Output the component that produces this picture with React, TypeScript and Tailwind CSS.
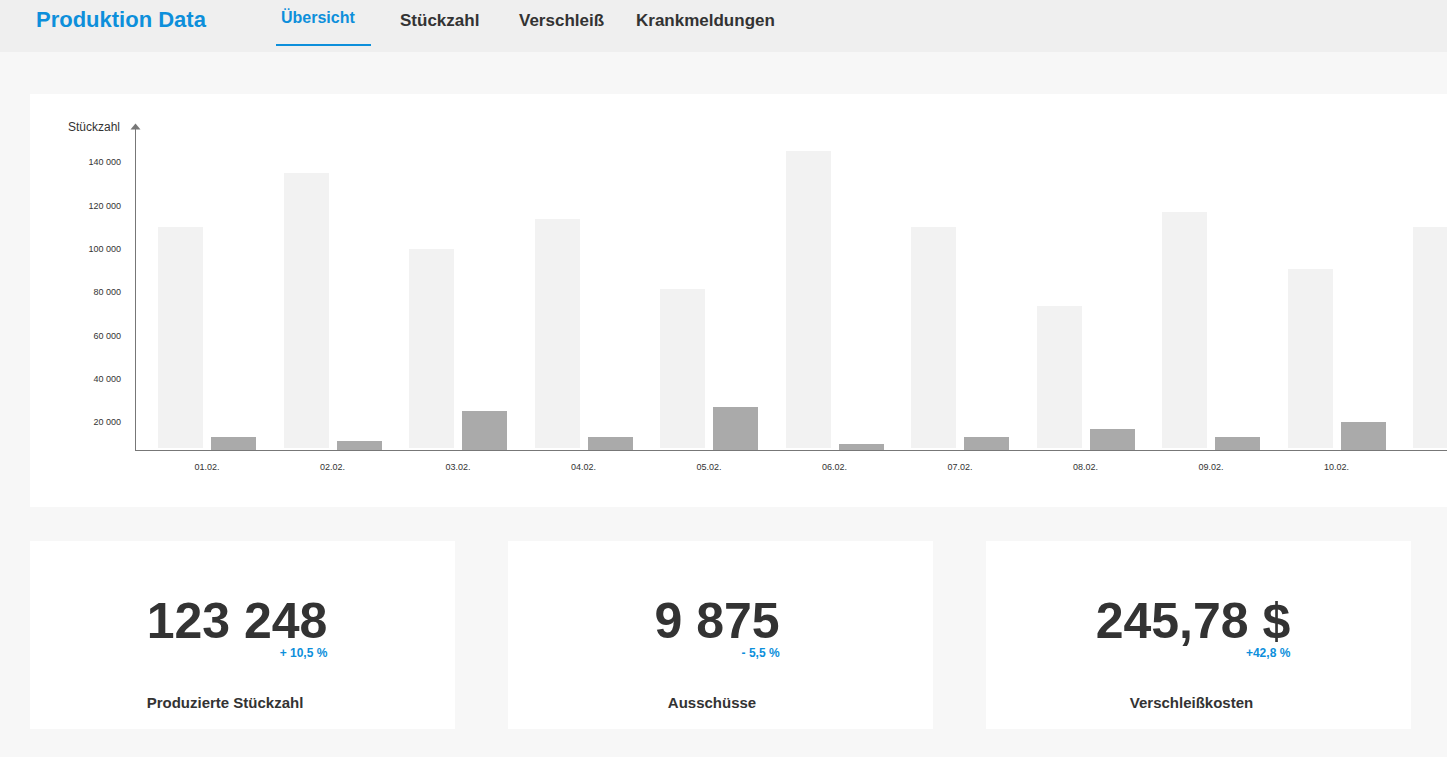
import React from 'react';

const PX_PER_UNIT = 43.33 / 20000;

const days = [
  { label: '01.02.', total: 110000, scrap: 13000 },
  { label: '02.02.', total: 135000, scrap: 11500 },
  { label: '03.02.', total: 100000, scrap: 25000 },
  { label: '04.02.', total: 114000, scrap: 13000 },
  { label: '05.02.', total: 81500, scrap: 27000 },
  { label: '06.02.', total: 145300, scrap: 10000 },
  { label: '07.02.', total: 110000, scrap: 13000 },
  { label: '08.02.', total: 73700, scrap: 17000 },
  { label: '09.02.', total: 117000, scrap: 13000 },
  { label: '10.02.', total: 90800, scrap: 20000 },
  { label: '', total: 110000, scrap: 14000 },
];

const ticks = ['140 000', '120 000', '100 000', '80 000', '60 000', '40 000', '20 000'];

const stats = [
  { value: '123 248', change: '+ 10,5 %', label: 'Produzierte Stückzahl', valueShift: '', labelShift: 'mr-[24px]' },
  { value: '9 875', change: '- 5,5 %', label: 'Ausschüsse', valueShift: 'ml-[4px]', labelShift: 'mr-[6px]' },
  { value: '245,78 $', change: '+42,8 %', label: 'Verschleißkosten', valueShift: '', labelShift: 'mr-[3px]' },
];

const Header: React.FC = () => (
  <header className="h-[52px] bg-[#efefef] flex items-start pl-[36px]">
    <div className="w-[240px] pt-[9px] text-[22px] leading-none font-bold text-[#0d8fdb]">Produktion Data</div>
    <nav className="flex items-start">
      <div className="w-[95px] h-[46px] px-[5px] pt-[10px] border-b-2 border-[#0d8fdb] text-[16px] leading-none font-bold text-[#0d8fdb]">
        Übersicht
      </div>
      <div className="ml-[29px] w-[119px] pt-[12px] text-[17px] leading-none font-bold text-[#333]">Stückzahl</div>
      <div className="w-[117px] pt-[12px] text-[17px] leading-none font-bold text-[#333]">Verschleiß</div>
      <div className="pt-[12px] text-[17px] leading-none font-bold text-[#333]">Krankmeldungen</div>
    </nav>
  </header>
);

const Chart: React.FC = () => (
  <div className="mt-[42px] ml-[30px] w-[1440px] h-[413px] shrink-0 bg-white pt-[26px]">
    <div className="flex items-end h-[331px]">
      <div className="w-[105px] shrink-0 h-full flex flex-col items-end pr-[15px] text-[#333]">
        <div className="h-[14px] leading-[14px] text-[12px]">Stückzahl</div>
        <div className="mt-[7.33px] flex flex-col items-end">
          {ticks.map((t) => (
            <div key={t} className="h-[43.33px] flex items-center text-[9px] leading-none mr-[-1px]">
              {t}
            </div>
          ))}
        </div>
      </div>
      <div className="relative flex-1 min-w-0 h-[326px] border-l border-b border-[#777] flex items-end pl-[22px]">
        <svg className="absolute -left-[6px] -top-[2px]" width="11" height="7" viewBox="0 0 11 7">
          <path d="M0.5 6.5 L5.5 0.5 L10.5 6.5 Z" fill="#777" />
        </svg>
        {days.map((d, i) => (
          <div key={i} className="w-[125.5px] shrink-0 flex items-end">
            <div
              className="w-[45px] mr-[8px] mb-[2px] bg-[#f2f2f2]"
              style={{ height: d.total * PX_PER_UNIT - 17.5 }}
            />
            <div className="w-[45px] bg-[#aaaaaa]" style={{ height: d.scrap * PX_PER_UNIT - 15.5 }} />
          </div>
        ))}
      </div>
    </div>
    <div className="flex pl-[128px] mt-[11px]">
      {days.map((d, i) => (
        <div key={i} className="w-[125.5px] shrink-0">
          <div className="w-[98px] text-center text-[9px] leading-[11px] text-[#333]">{d.label}</div>
        </div>
      ))}
    </div>
  </div>
);

interface StatCardProps {
  value: string;
  change: string;
  label: string;
  valueShift: string;
  labelShift: string;
}

const StatCard: React.FC<StatCardProps> = ({ value, change, label, valueShift, labelShift }) => (
  <div className="w-[425px] h-[188px] shrink-0 bg-white flex flex-col items-center pr-[11px] pt-[54.5px] text-[#333]">
    <div className={`inline-flex flex-col items-end ${valueShift}`}>
      <div className="text-[50px] leading-none font-bold">{value}</div>
      <div className="mt-[1.5px] text-[12px] leading-none font-bold text-[#0d8fdb]">{change}</div>
    </div>
    <div className={`mt-[36px] text-[15px] leading-none font-bold ${labelShift}`}>{label}</div>
  </div>
);

export default function App() {
  return (
    <div className="w-full min-h-screen overflow-hidden bg-[#f7f7f7] font-['Liberation_Sans',Arial,sans-serif]">
      <Header />
      <Chart />
      <div className="mt-[34px] ml-[30px] flex gap-[53px]">
        {stats.map((s) => (
          <StatCard key={s.label} {...s} />
        ))}
      </div>
    </div>
  );
}
